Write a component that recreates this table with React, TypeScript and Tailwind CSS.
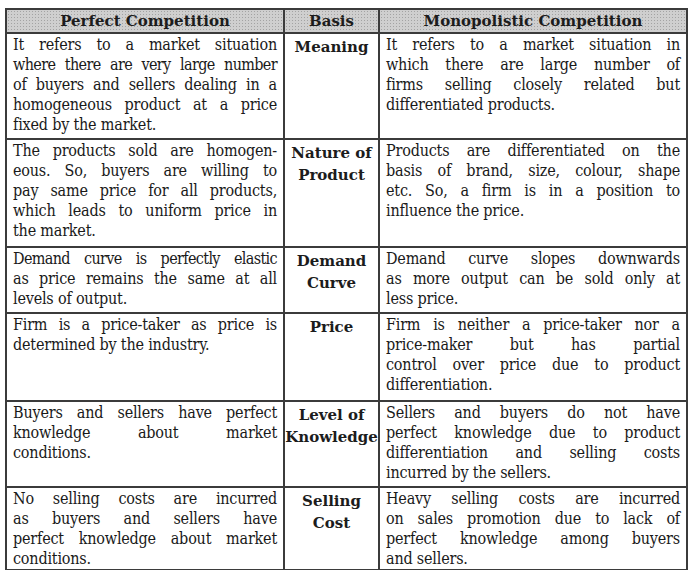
import React from 'react';

type Row = {
  left: string[];
  basis: string[];
  right: string[];
  pad: string;
};

// a leading "~" marks a line the printer squeezed to fit
const rows: Row[] = [
  {
    left: [
      'It refers to a market situation',
      '~where there are very large number',
      'of buyers and sellers dealing in a',
      'homogeneous product at a price',
      'fixed by the market.',
    ],
    basis: ['Meaning'],
    right: [
      'It refers to a market situation in',
      'which there are large number of',
      'firms selling closely related but',
      'differentiated products.',
    ],
    pad: 'pb-[3px]',
  },
  {
    left: [
      'The products sold are homogen-',
      'eous. So, buyers are willing to',
      'pay same price for all products,',
      'which leads to uniform price in',
      'the market.',
    ],
    basis: ['Nature of', 'Product'],
    right: [
      'Products are differentiated on the',
      'basis of brand, size, colour, shape',
      'etc. So, a firm is in a position to',
      'influence the price.',
    ],
    pad: 'pb-[5px]',
  },
  {
    left: [
      '~Demand curve is perfectly elastic',
      'as price remains the same at all',
      'levels of output.',
    ],
    basis: ['Demand', 'Curve'],
    right: [
      'Demand curve slopes downwards',
      'as more output can be sold only at',
      'less price.',
    ],
    pad: 'pb-[3px]',
  },
  {
    left: ['Firm is a price-taker as price is', 'determined by the industry.'],
    basis: ['Price'],
    right: [
      'Firm is neither a price-taker nor a',
      'price-maker but has partial',
      'control over price due to product',
      'differentiation.',
    ],
    pad: 'pb-[5px]',
  },
  {
    left: [
      'Buyers and sellers have perfect',
      'knowledge about market',
      'conditions.',
    ],
    basis: ['Level of', 'Knowledge'],
    right: [
      'Sellers and buyers do not have',
      'perfect knowledge due to product',
      'differentiation and selling costs',
      'incurred by the sellers.',
    ],
    pad: 'pb-[3px]',
  },
  {
    left: [
      'No selling costs are incurred',
      'as buyers and sellers have',
      'perfect knowledge about market',
      'conditions.',
    ],
    basis: ['Selling', 'Cost'],
    right: [
      'Heavy selling costs are incurred',
      'on sales promotion due to lack of',
      'perfect knowledge among buyers',
      'and sellers.',
    ],
    pad: 'pb-0',
  },
];

function clsx(...parts: (string | false)[]) {
  return parts.filter(Boolean).join(' ');
}

// every line but the last is stretched edge to edge, like the printed page
function Lines({ lines }: { lines: string[] }) {
  return (
    <>
      {lines.map((raw, i) => {
        const tight = raw.startsWith('~');
        const line = tight ? raw.slice(1) : raw;
        return (
          <div
            key={i}
            className={clsx(
              'whitespace-nowrap',
              i < lines.length - 1 && 'text-justify [text-align-last:justify]',
              tight && 'tracking-[-0.04em]'
            )}
          >
            {line}
          </div>
        );
      })}
    </>
  );
}

const head =
  "border-2 border-[#3b3b3b] bg-[#cfcfcf] bg-[image:radial-gradient(circle,#a3a3a3_0.6px,transparent_1px)] bg-[length:3px_3px] h-[24px] p-0 text-center font-['DejaVu_Serif',serif] font-bold text-[15px] leading-[20px] text-[#1c1c1c]";
const cell =
  "border-2 border-[#3b3b3b] align-top px-[6px] pt-[1px] font-['DejaVu_Serif_Condensed','DejaVu_Serif',serif] [font-stretch:condensed] text-[16px] tracking-[-0.2px] leading-[20px] text-[#1a1a1a]";
const label =
  "border-2 border-[#3b3b3b] align-top px-0 pt-[2px] text-center font-['DejaVu_Serif',serif] font-bold text-[15px] leading-[22px] text-[#1c1c1c]";

export default function App() {
  return (
    <div className="w-[692px] h-[570px] bg-white overflow-hidden">
      <table className="ml-[5px] mt-2 w-[681px] table-fixed border-collapse">
        <colgroup>
          <col className="w-[278px]" />
          <col className="w-[95px]" />
          <col className="w-[308px]" />
        </colgroup>
        <thead>
          <tr>
            <th className={head}>Perfect Competition</th>
            <th className={head}>Basis</th>
            <th className={head}>Monopolistic Competition</th>
          </tr>
        </thead>
        <tbody>
          {rows.map((row, i) => (
            <tr key={i}>
              <td className={clsx(cell, row.pad)}>
                <Lines lines={row.left} />
              </td>
              <td className={label}>
                {row.basis.map((b, j) => (
                  <div key={j} className="whitespace-nowrap">
                    {b}
                  </div>
                ))}
              </td>
              <td className={clsx(cell, row.pad)}>
                <Lines lines={row.right} />
              </td>
            </tr>
          ))}
        </tbody>
      </table>
    </div>
  );
}
